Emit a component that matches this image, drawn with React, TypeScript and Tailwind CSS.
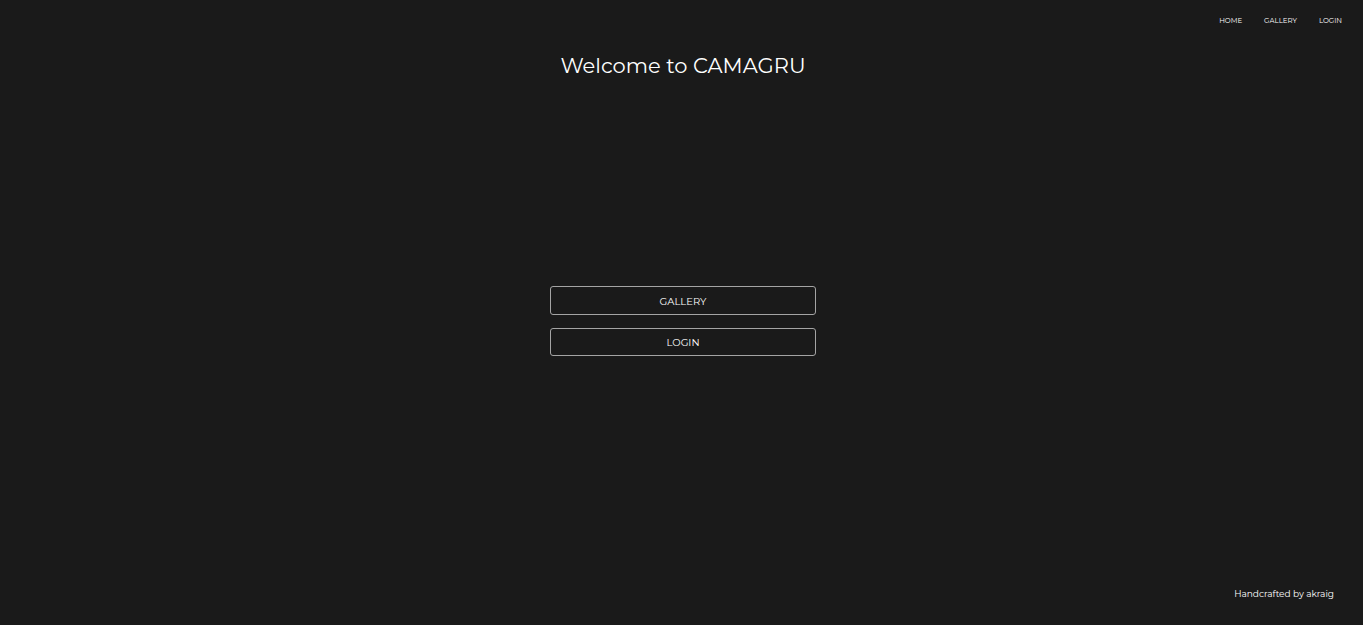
const links = [
  { label: "HOME", href: "#home" },
  { label: "GALLERY", href: "#gallery" },
  { label: "LOGIN", href: "#login" },
];

export default function App() {
  return (
    <div className="flex min-h-screen flex-col bg-[#1a1a1a] font-['Montserrat','Inter',sans-serif] text-white">
      <nav className="flex h-[41px] items-center justify-end gap-[22px] px-[21px] pt-px text-[7px]">
        {links.map((link) => (
          <a key={link.label} href={link.href}>
            {link.label}
          </a>
        ))}
      </nav>
      <h1 className="pl-[3px] text-center text-[21px] leading-[49px]">
        Welcome to CAMAGRU
      </h1>
      <main className="flex flex-1 flex-col items-center justify-center gap-[13px] pl-[3px]">
        <button className="h-[29px] w-[266px] rounded-[3px] border border-[#a4a4a4] pt-px text-[10px]">
          GALLERY
        </button>
        <button className="h-[28px] w-[266px] rounded-[3px] border border-[#a4a4a4] pt-px text-[10px]">
          LOGIN
        </button>
      </main>
      <footer className="h-[73px] px-[29px] pt-[32px] text-right text-[9px] leading-[20px]">
        Handcrafted by akraig
      </footer>
    </div>
  );
}
